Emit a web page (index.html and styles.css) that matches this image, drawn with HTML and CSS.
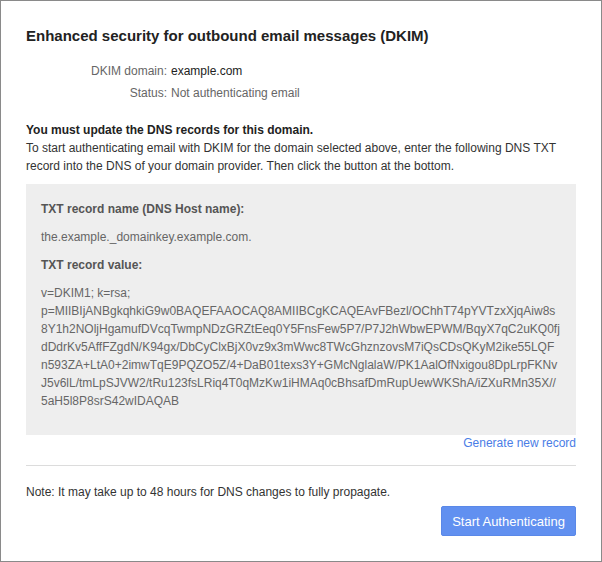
FILE: index.html
```html
<!DOCTYPE html>
<html>
<head>
<meta charset="utf-8">
<link rel="stylesheet" href="styles.css">
</head>
<body>
<div class="dialog">
  <h1 class="title">Enhanced security for outbound email messages (DKIM)</h1>
  <div class="info">
    <div class="label">DKIM domain:</div><div class="value">example.com</div>
    <div class="label">Status:</div><div class="value muted">Not authenticating email</div>
  </div>
  <p class="warn">You must update the DNS records for this domain.</p>
  <p class="desc">To start authenticating email with DKIM for the domain selected above, enter the following DNS TXT record into the DNS of your domain provider. Then click the button at the bottom.</p>
  <div class="record">
    <div class="rec-label">TXT record name (DNS Host name):</div>
    <div class="rec-text">the.example._domainkey.example.com.</div>
    <div class="rec-label">TXT record value:</div>
    <div class="rec-text key">v=DKIM1; k=rsa;<br>p=MIIBIjANBgkqhkiG9w0BAQEFAAOCAQ8AMIIBCgKCAQEAvFBezl/OChhT74pYVTzxXjqAiw8s<br>8Y1h2NOljHgamufDVcqTwmpNDzGRZtEeq0Y5FnsFew5P7/P7J2hWbwEPWM/BqyX7qC2uKQ0fj<br>dDdrKv5AffFZgdN/K94gx/DbCyClxBjX0vz9x3mWwc8TWcGhznzovsM7iQsCDsQKyM2ike55LQF<br>n593ZA+LtA0+2imwTqE9PQZO5Z/4+DaB01texs3Y+GMcNglalaW/PK1AalOfNxigou8DpLrpFKNv<br>J5v6lL/tmLpSJVW2/tRu123fsLRiq4T0qMzKw1iHMAq0cBhsafDmRupUewWKShA/iZXuRMn35X//<br>5aH5l8P8srS42wIDAQAB</div>
  </div>
  <div class="gen"><a class="gen-link" href="#">Generate new record</a></div>
  <hr class="sep">
  <p class="note">Note: It may take up to 48 hours for DNS changes to fully propagate.</p>
  <div class="actions"><button class="btn">Start Authenticating</button></div>
</div>
</body>
</html>
```
FILE: styles.css
```css
html, body {
  margin: 0;
  padding: 0;
  background: #fff;
}
body {
  font-family: "Liberation Sans", Arial, sans-serif;
  font-size: 12px;
  color: #333;
}
.dialog {
  box-sizing: border-box;
  width: 602px;
  height: 562px;
  border: 1px solid #8a8a8a;
  padding: 25px 25px 0 25px;
  display: flex;
  flex-direction: column;
}
.title {
  margin: 0;
  font-size: 15px;
  line-height: 20px;
  font-weight: bold;
  color: #222;
}
.info {
  margin-top: 14px;
  display: grid;
  grid-template-columns: 141px auto;
  column-gap: 4px;
  line-height: 22px;
}
.label {
  text-align: right;
  color: #666;
}
.value {
  color: #222;
}
.value.muted {
  color: #666;
}
.warn {
  margin: 17px 0 0 0;
  font-weight: bold;
  color: #222;
  line-height: 18px;
}
.desc {
  margin: 0;
  line-height: 18px;
  color: #333;
}
.record {
  margin-top: 9px;
  background: #eeeeee;
  padding: 16px 15px 15px 15px;
  color: #666;
  line-height: 18px;
}
.rec-label {
  font-weight: bold;
  color: #555;
  margin-bottom: 10px;
}
.rec-text {
  margin-bottom: 10px;
  white-space: nowrap;
}
.gen {
  text-align: right;
  line-height: 16px;
}
.gen-link {
  color: #4a7de6;
  text-decoration: none;
}
.sep {
  margin: 14px 0 0 0;
  border: 0;
  border-top: 1px solid #dcdcdc;
  height: 0;
}
.note {
  margin: 17px 0 0 0;
  line-height: 18px;
  color: #333;
}
.actions {
  margin-top: 5px;
  display: flex;
  justify-content: flex-end;
}
.btn {
  height: 30px;
  padding: 0 10px 0 10px;
  width: 135px;
  background: #6190f0;
  border: 1px solid #5a88e8;
  border-radius: 2px;
  color: #fff;
  font-family: "Liberation Sans", Arial, sans-serif;
  font-size: 13px;
}
```
